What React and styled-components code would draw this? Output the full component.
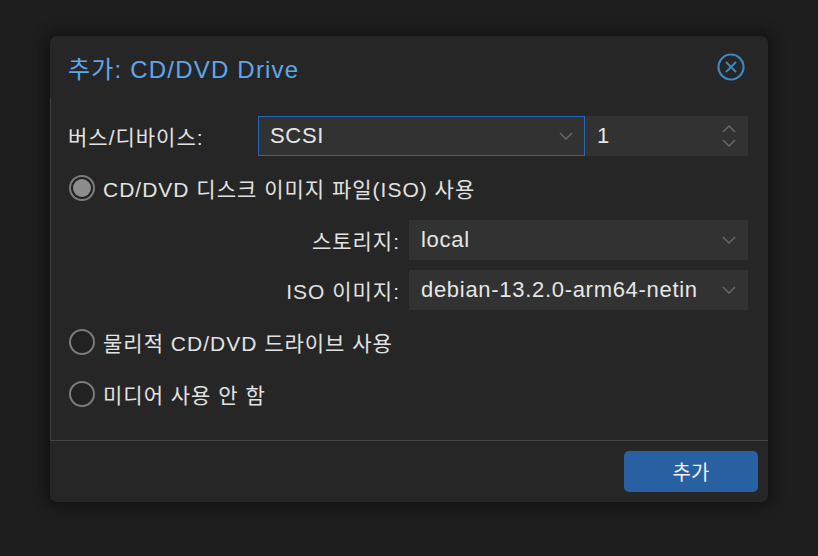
import React from "react";
import styled, { createGlobalStyle } from "styled-components";

const Global = createGlobalStyle`
  html, body { margin: 0; padding: 0; background: #1e1e1e; }
  body { width: 818px; height: 556px; overflow: hidden; font-family: "Liberation Sans", "Noto Sans CJK KR", sans-serif; }
`;

const Page = styled.div`
  width: 818px;
  height: 556px;
  padding: 36px 0 0 50px;
  box-sizing: border-box;
`;

const Dialog = styled.div`
  width: 718px;
  height: 466px;
  background: #262626;
  border-radius: 7px;
  box-shadow: 0 0 14px 4px rgba(0, 0, 0, 0.45);
  display: flex;
  flex-direction: column;
  overflow: hidden;
`;

const Header = styled.div`
  height: 62px;
  display: flex;
  align-items: center;
  justify-content: space-between;
  padding: 0 23px 0 18px;
  box-sizing: border-box;
`;

const Title = styled.div`
  color: #5ea8ea;
  font-size: 24px;
  letter-spacing: 1.2px;
`;

const CloseBtn = styled.div`
  width: 28px;
  height: 28px;
  display: flex;
`;

const Body = styled.div`
  flex: 1;
  border-left: 1px solid #3e3e3e;
  border-bottom: 1px solid #444;
  padding: 18px 20px 0 17px;
  display: flex;
  flex-direction: column;
  gap: 12px;
`;

const Row = styled.div`
  height: 40px;
  display: flex;
  align-items: center;
  margin-left: ${(p) => p.$indent || 0}px;
`;

const Label = styled.div`
  width: ${(p) => p.$w}px;
  flex: none;
  color: #e2e2e2;
  font-size: 21px;
  letter-spacing: 1px;
  text-align: ${(p) => (p.$right ? "right" : "left")};
  padding-right: ${(p) => (p.$right ? 9 : 0)}px;
  box-sizing: border-box;
  white-space: nowrap;
`;

const Group = styled.div`
  display: flex;
  flex-direction: column;
  gap: 10px;
`;

const Field = styled.div`
  height: 40px;
  flex: ${(p) => (p.$w ? "none" : "1")};
  width: ${(p) => (p.$w ? `${p.$w}px` : "auto")};
  background: #323232;
  box-sizing: border-box;
  border: 1px solid ${(p) => (p.$focus ? "#2568b8" : "#323232")};
  display: flex;
  align-items: center;
  padding: 0 1px 0 11px;
  overflow: hidden;
`;

const FieldText = styled.div`
  flex: 1;
  min-width: 0;
  margin-right: 13px;
  color: #e6e6e6;
  font-size: 22px;
  letter-spacing: 0.7px;
  white-space: nowrap;
  overflow: hidden;
`;

const Trigger = styled.div`
  flex: none;
  width: 34px;
  display: flex;
  flex-direction: column;
  align-items: center;
  justify-content: center;
  gap: 6px;
`;

const RadioRow = styled.div`
  height: 40px;
  display: flex;
  align-items: center;
  gap: 8px;
  padding-left: 1px;
`;

const RadioCircle = styled.div`
  width: 26px;
  height: 26px;
  border-radius: 50%;
  box-sizing: border-box;
  border: 2px solid #7c7c7c;
  background: #222;
  display: flex;
  align-items: center;
  justify-content: center;
  &::after {
    content: "";
    display: ${(p) => (p.$checked ? "block" : "none")};
    width: 18px;
    height: 18px;
    border-radius: 50%;
    background: #8d8d8d;
  }
`;

const RadioText = styled.div`
  color: #e2e2e2;
  font-size: 21px;
  letter-spacing: 1px;
  white-space: nowrap;
`;

const Footer = styled.div`
  height: 61px;
  display: flex;
  justify-content: flex-end;
  align-items: center;
  padding: 0 10px 0 0;
`;

const Button = styled.div`
  width: 134px;
  height: 41px;
  background: #2860a1;
  border-radius: 5px;
  color: #f0f0f0;
  font-size: 20px;
  display: flex;
  align-items: center;
  justify-content: center;
`;

const Chevron = ({ up }) => (
  <svg width="14" height="8" viewBox="0 0 14 8">
    <polyline
      points={up ? "1,7 7,1 13,7" : "1,1 7,7 13,1"}
      fill="none"
      stroke="#666"
      strokeWidth="1.6"
    />
  </svg>
);

const CloseIcon = () => (
  <svg width="28" height="28" viewBox="0 0 28 28">
    <circle cx="14" cy="14" r="12.5" fill="none" stroke="#3e86bf" strokeWidth="2.2" />
    <line x1="9" y1="9" x2="19" y2="19" stroke="#3e86bf" strokeWidth="2" />
    <line x1="19" y1="9" x2="9" y2="19" stroke="#3e86bf" strokeWidth="2" />
  </svg>
);

export default function App() {
  return (
    <>
      <Global />
      <Page>
        <Dialog>
          <Header>
            <Title>추가: CD/DVD Drive</Title>
            <CloseBtn>
              <CloseIcon />
            </CloseBtn>
          </Header>
          <Body>
            <Row>
              <Label $w={190}>버스/디바이스:</Label>
              <Field $focus>
                <FieldText>SCSI</FieldText>
                <Trigger>
                  <Chevron />
                </Trigger>
              </Field>
              <Field $w={163}>
                <FieldText>1</FieldText>
                <Trigger>
                  <Chevron up />
                  <Chevron />
                </Trigger>
              </Field>
            </Row>
            <RadioRow>
              <RadioCircle $checked />
              <RadioText>CD/DVD 디스크 이미지 파일(ISO) 사용</RadioText>
            </RadioRow>
            <Group>
              <Row $indent={190}>
                <Label $w={151} $right>스토리지:</Label>
                <Field>
                  <FieldText>local</FieldText>
                  <Trigger>
                    <Chevron />
                  </Trigger>
                </Field>
              </Row>
              <Row $indent={190}>
                <Label $w={151} $right>ISO 이미지:</Label>
                <Field>
                  <FieldText>debian-13.2.0-arm64-netin</FieldText>
                  <Trigger>
                    <Chevron />
                  </Trigger>
                </Field>
              </Row>
            </Group>
            <RadioRow>
              <RadioCircle />
              <RadioText>물리적 CD/DVD 드라이브 사용</RadioText>
            </RadioRow>
            <RadioRow>
              <RadioCircle />
              <RadioText>미디어 사용 안 함</RadioText>
            </RadioRow>
          </Body>
          <Footer>
            <Button>추가</Button>
          </Footer>
        </Dialog>
      </Page>
    </>
  );
}
